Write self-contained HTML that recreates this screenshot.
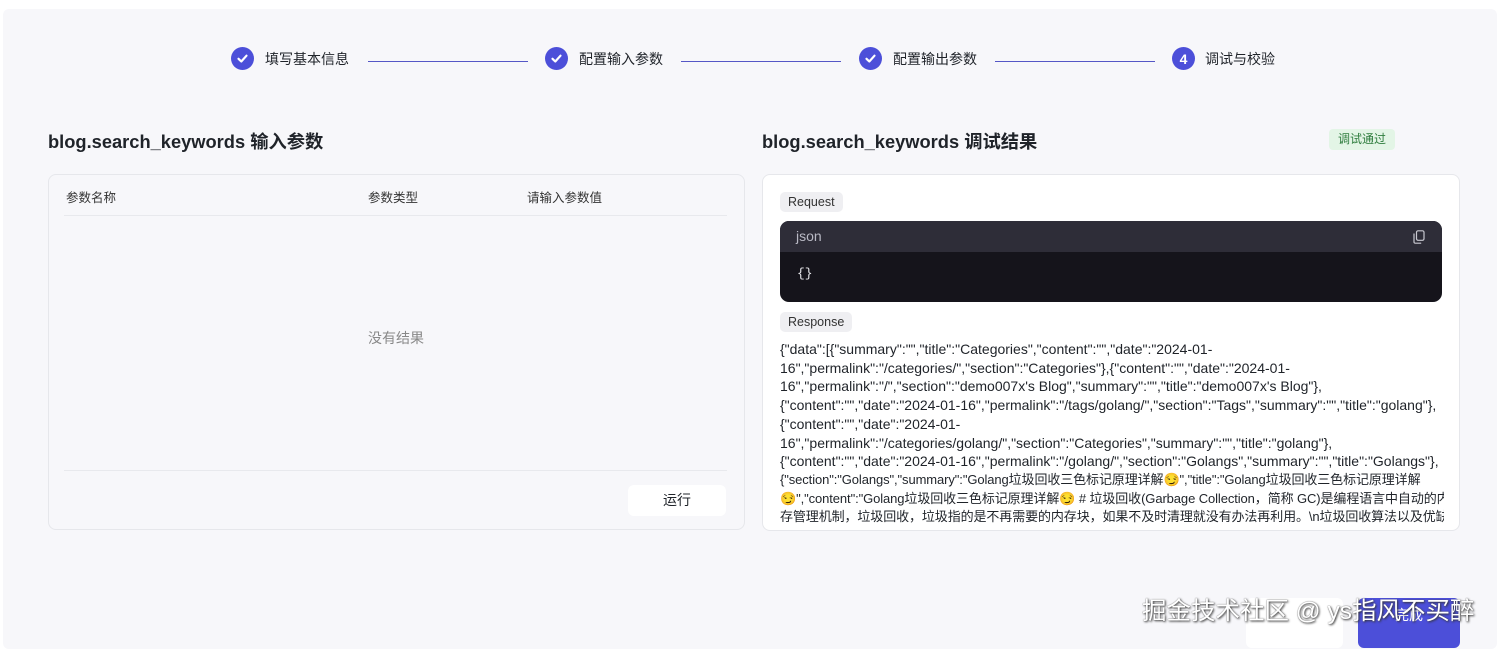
<!DOCTYPE html>
<html><head><meta charset="utf-8"><style>
*{margin:0;padding:0;box-sizing:border-box}
body{width:1497px;height:644px;overflow:hidden;background:#fff;font-family:"Liberation Sans","Noto Sans CJK SC",sans-serif;color:#1f2329;position:relative}
.main{position:absolute;left:3px;top:9px;width:1494px;height:640px;background:#f7f7fa;border-radius:6px}
.a{position:absolute;white-space:nowrap}
.step{position:absolute;top:47px;display:flex;align-items:center;font-size:14px;color:#1f2329}
.ic{width:23px;height:23px;border-radius:50%;background:#4c4fd9;display:flex;align-items:center;justify-content:center;color:#fff;font-size:14px;font-weight:bold;margin-right:11px}
.line{position:absolute;top:61px;height:1px;background:#5557c6}
.h{font-size:18.3px;font-weight:bold;color:#1f2329}
.card{position:absolute;border:1px solid #e6e7eb;border-radius:8px}
.tag{position:absolute;background:#efeff2;border-radius:5px;font-size:12.5px;color:#333;padding:0 8px;height:20px;line-height:20px}
.resp{position:absolute;left:780px;top:340px;width:664px;height:190px;overflow:hidden;font-size:14px;line-height:18.7px;color:#1f2329}
.resp div{white-space:nowrap}
.resp .c{font-size:13px;letter-spacing:-0.1px}
</style></head><body>
<div class="main"></div>
<div class="step" style="left:231px"><div class="ic"><svg width="13" height="13" viewBox="0 0 13 13"><path d="M2.5 6.8l2.8 2.7 5.2-5.8" stroke="#fff" stroke-width="2.2" fill="none" stroke-linecap="round" stroke-linejoin="round"/></svg></div>填写基本信息</div>
<div class="line" style="left:368px;width:160px"></div>
<div class="step" style="left:545px"><div class="ic"><svg width="13" height="13" viewBox="0 0 13 13"><path d="M2.5 6.8l2.8 2.7 5.2-5.8" stroke="#fff" stroke-width="2.2" fill="none" stroke-linecap="round" stroke-linejoin="round"/></svg></div>配置输入参数</div>
<div class="line" style="left:681px;width:160px"></div>
<div class="step" style="left:859px"><div class="ic"><svg width="13" height="13" viewBox="0 0 13 13"><path d="M2.5 6.8l2.8 2.7 5.2-5.8" stroke="#fff" stroke-width="2.2" fill="none" stroke-linecap="round" stroke-linejoin="round"/></svg></div>配置输出参数</div>
<div class="line" style="left:995px;width:160px"></div>
<div class="step" style="left:1172px"><div class="ic" style="margin-right:10px">4</div>调试与校验</div>

<div class="a h" style="left:48px;top:128px">blog.search_keywords 输入参数</div>
<div class="card" style="left:48px;top:174px;width:697px;height:356px"></div>
<div class="a" style="left:66px;top:187px;font-size:12.5px;color:#333">参数名称</div>
<div class="a" style="left:368px;top:187px;font-size:12.5px;color:#333">参数类型</div>
<div class="a" style="left:527px;top:187px;font-size:12.5px;color:#333">请输入参数值</div>
<div class="a" style="left:64px;top:215px;width:663px;height:1px;background:#e8e9ed"></div>
<div class="a" style="left:368px;top:328px;font-size:14px;color:#888">没有结果</div>
<div class="a" style="left:64px;top:470px;width:663px;height:1px;background:#e8e9ed"></div>
<div class="a" style="left:628px;top:485px;width:98px;height:31px;background:#fff;border-radius:6px;text-align:center;line-height:31px;font-size:14px;color:#1f2329">运行</div>

<div class="a h" style="left:762px;top:128px">blog.search_keywords 调试结果</div>
<div class="a" style="left:1329px;top:129px;height:21px;line-height:21px;padding:0 9px;background:#e3f5e6;border-radius:4px;font-size:12px;color:#2f7d3e">调试通过</div>
<div class="card" style="left:762px;top:174px;width:698px;height:357px;background:#fff"></div>
<div class="tag" style="left:780px;top:192px">Request</div>
<div class="a" style="left:780px;top:221px;width:662px;height:81px;background:#15141b;border-radius:9px;overflow:hidden">
 <div style="height:31px;background:#2e2d38;color:#b9b9c4;font-size:14px;line-height:31px;padding-left:16px">json</div>
 <svg style="position:absolute;right:17px;top:9px" width="12" height="14" viewBox="0 0 12 14"><rect x="3.5" y="0.8" width="7.5" height="9.5" rx="1.5" fill="none" stroke="#c8c8d0" stroke-width="1.2"/><path d="M1 3.5v8.5a1.2 1.2 0 0 0 1.2 1.2h6" fill="none" stroke="#c8c8d0" stroke-width="1.2"/></svg>
 <div style="color:#e6e6ea;font-family:'Liberation Mono',monospace;font-size:13px;padding:14px 0 0 17px">{}</div>
</div>
<div class="tag" style="left:780px;top:312px">Response</div>
<div class="resp">
<div>{"data":[{"summary":"","title":"Categories","content":"","date":"2024-01-</div>
<div>16","permalink":"/categories/","section":"Categories"},{"content":"","date":"2024-01-</div>
<div>16","permalink":"/","section":"demo007x's Blog","summary":"","title":"demo007x's Blog"},</div>
<div>{"content":"","date":"2024-01-16","permalink":"/tags/golang/","section":"Tags","summary":"","title":"golang"},</div>
<div>{"content":"","date":"2024-01-</div>
<div>16","permalink":"/categories/golang/","section":"Categories","summary":"","title":"golang"},</div>
<div>{"content":"","date":"2024-01-16","permalink":"/golang/","section":"Golangs","summary":"","title":"Golangs"},</div>
<div class="c">{"section":"Golangs","summary":"Golang垃圾回收三色标记原理详解😏","title":"Golang垃圾回收三色标记原理详解</div>
<div class="c">😏","content":"Golang垃圾回收三色标记原理详解😏 # 垃圾回收(Garbage Collection，简称 GC)是编程语言中自动的内</div>
<div class="c">存管理机制，垃圾回收，垃圾指的是不再需要的内存块，如果不及时清理就没有办法再利用。\n垃圾回收算法以及优缺</div>
</div>
<div class="a" style="left:762px;top:531px;width:698px;height:8px;background:#f7f7fa"></div>

<div class="a" style="left:1246px;top:598px;width:97px;height:50px;background:#fff;border-radius:6px"></div>
<div class="a" style="left:1358px;top:598px;width:102px;height:50px;background:#4c4fd9;border-radius:6px;color:#fff;font-size:14px;text-align:center;line-height:34px">完成</div>
<div class="a" style="left:1142px;top:592px;font-size:24.5px;color:#fff;text-shadow:1px 1px 2px #333,0 0 1px #555">掘金技术社区 @ ys指风不买醉</div>
</body></html>
